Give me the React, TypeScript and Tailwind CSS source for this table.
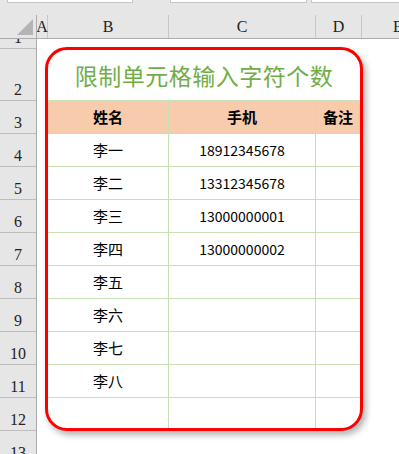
import React from "react";

const rows = [
  { name: "李一", phone: "18912345678" },
  { name: "李二", phone: "13312345678" },
  { name: "李三", phone: "13000000001" },
  { name: "李四", phone: "13000000002" },
  { name: "李五", phone: "" },
  { name: "李六", phone: "" },
  { name: "李七", phone: "" },
  { name: "李八", phone: "" },
];

// row header heights (px, incl. bottom line)
const rowHeads: [string, string][] = [
  ["1", "h-[10px]"],
  ["2", "h-[52px]"],
  ["3", "h-[33px]"],
  ["4", "h-[33px]"],
  ["5", "h-[33px]"],
  ["6", "h-[33px]"],
  ["7", "h-[33px]"],
  ["8", "h-[33px]"],
  ["9", "h-[33px]"],
  ["10", "h-[33px]"],
  ["11", "h-[33px]"],
  ["12", "h-[33px]"],
  ["13", "h-[33px]"],
];

const cjk = "font-['Noto_Sans_CJK_SC',sans-serif]";
const serif = "font-['Liberation_Serif',serif]";

export default function App() {
  return (
    <div className="w-[399px] h-[454px] overflow-hidden bg-[#e6e6e6] flex flex-col">
      {/* formula bar bottom edges */}
      <div className="h-[15px] flex items-start shrink-0">
        <div className="ml-[7px] w-[126px] h-[3px] bg-white border border-t-0 border-[#c6c6c6]" />
        <div className="ml-[37px] w-[137px] h-[3px] bg-white border border-t-0 border-[#c6c6c6]" />
        <div className="ml-[4px] flex-1 h-[3px] bg-white border border-t-0 border-r-0 border-[#c6c6c6]" />
      </div>

      {/* column headers */}
      <div className={`flex h-[24px] shrink-0 border-b border-[#ababab] text-[16px] text-[#222] ${serif}`}>
        <div className="w-[37px] shrink-0 border-r border-[#ababab] relative">
          <div className="absolute right-[3px] bottom-[3px] w-0 h-0 border-l-[16px] border-l-transparent border-b-[16px] border-b-[#b4b4b4]" />
        </div>
        <div className="w-[11px] shrink-0 border-r border-[#c6c6c6] flex items-center justify-center">A</div>
        <div className="w-[121px] shrink-0 border-r border-[#c6c6c6] flex items-center justify-center">B</div>
        <div className="w-[147px] shrink-0 border-r border-[#c6c6c6] flex items-center justify-center">C</div>
        <div className="w-[46px] shrink-0 border-r border-[#c6c6c6] flex items-center justify-center">D</div>
        <div className="w-[72px] shrink-0 flex items-center justify-center">E</div>
      </div>

      <div className="flex flex-1 min-h-0">
        {/* row headers */}
        <div className={`w-[37px] shrink-0 border-r border-[#ababab] flex flex-col text-[16px] text-[#222] ${serif}`}>
          {rowHeads.map(([n, h]) => (
            <div
              key={n}
              className={`${h} shrink-0 border-b border-[#bdbdbd] flex items-end justify-center overflow-hidden leading-[18px] pb-[1px]`}
            >
              {n}
            </div>
          ))}
        </div>

        {/* sheet area */}
        <div className="flex-1 bg-white pl-[8px] pt-[8px]">
          <div className={`w-[318px] h-[384px] border-[3px] border-[#ff0000] rounded-[22px] overflow-hidden bg-white shadow-[3px_4px_6px_rgba(0,0,0,0.3)] ${cjk}`}>
            <div className="h-[51px] border-b border-[#c6e0b4] flex items-center justify-center text-[23px] text-[#70ad47] tracking-[0.5px]">
              限制单元格输入字符个数
            </div>
            <div className="h-[33px] flex bg-[#f8cbad] border-b border-[#c6e0b4] text-[15px] font-bold text-black">
              <div className="w-[121px] shrink-0 border-r border-[#c6e0b4] flex items-center justify-center">姓名</div>
              <div className="w-[147px] shrink-0 border-r border-[#c6e0b4] flex items-center justify-center">手机</div>
              <div className="flex-1 flex items-center justify-center">备注</div>
            </div>
            {rows.map((r) => (
              <div key={r.name} className="h-[33px] flex border-b border-[#c6e0b4] text-black">
                <div className="w-[121px] shrink-0 border-r border-[#c6e0b4] flex items-center justify-center text-[15px]">
                  {r.name}
                </div>
                <div className="w-[147px] shrink-0 border-r border-[#c6e0b4] flex items-center justify-center text-[14px]">
                  {r.phone}
                </div>
                <div className="flex-1" />
              </div>
            ))}
            <div className="h-[40px] flex">
              <div className="w-[121px] shrink-0 border-r border-[#c6e0b4]" />
              <div className="w-[147px] shrink-0 border-r border-[#c6e0b4]" />
              <div className="flex-1" />
            </div>
          </div>
        </div>
      </div>
    </div>
  );
}
